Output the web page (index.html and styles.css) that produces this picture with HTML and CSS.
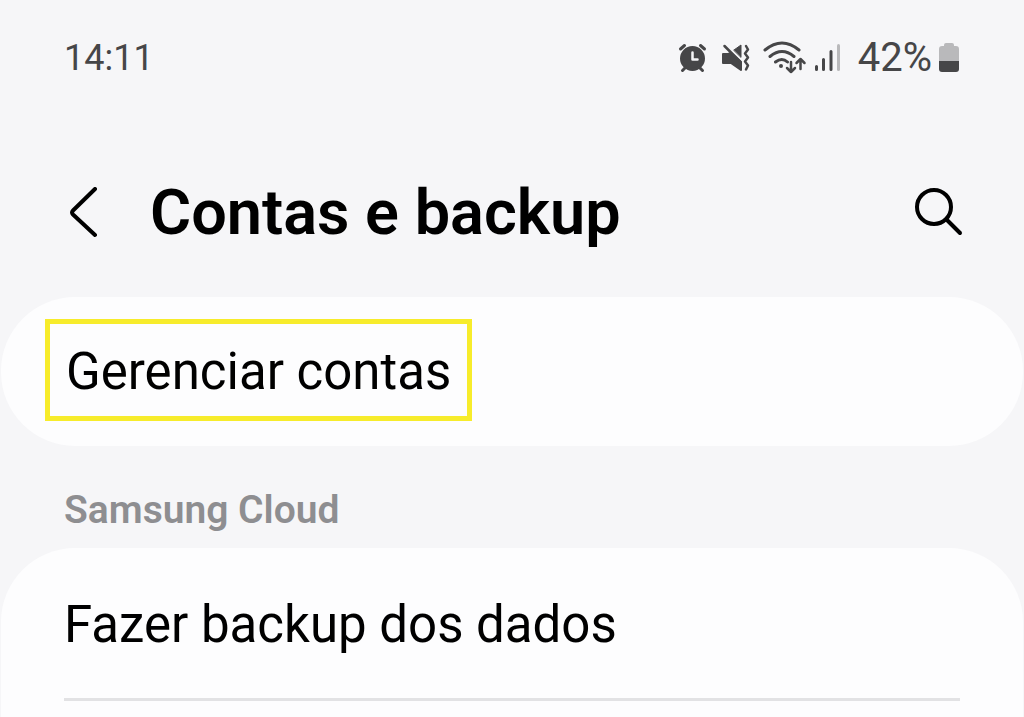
FILE: index.html
```html
<!DOCTYPE html>
<html lang="pt-BR">
<head>
<meta charset="utf-8">
<meta name="viewport" content="width=device-width, initial-scale=1">
<title>Contas e backup</title>
<link rel="stylesheet" href="styles.css">
</head>
<body>
<div class="screen">
  <div class="status-bar">
    <time class="clock">14:11</time>
    <div class="status-icons">
      <svg class="status-glyphs" width="166" height="36" viewBox="676 40 166 36" fill="none" stroke-linecap="round" stroke-linejoin="round" aria-hidden="true">
        <g stroke="#464648" stroke-width="3">
          <circle cx="692.500" cy="58.500" r="11" fill="#464648"/>
          <path d="M680.500 49l4-3.500M704.500 49l-4-3.500M685 68l-2.500 2.500M700 68l2.500 2.500"/>
          <path d="M692.500 52.500v7h5" stroke="#f6f6f8" stroke-width="2.500"/>
        </g>
        <g stroke="#464648">
          <path d="M723 54h5l3-1 10 9v8l-10-7h-8z" fill="#464648" stroke-width="2"/>
          <path d="M734 50l7-5v12z" fill="#464648" stroke-width="1"/>
          <path d="M724.500 46l16 16" stroke-width="2.500"/>
          <path d="M746 46l2 3.500-3 4 3 4-3 4 3 4-2 4" stroke-width="2.500"/>
        </g>
        <g stroke="#464648" stroke-width="3">
          <path d="M765 50q17-14 34 0M770 56.500q12-10 24 0M775.500 62q6.500-5 12 0"/>
          <circle cx="781" cy="66" r="2" fill="#464648" stroke="none"/>
          <path d="M791 62v10M787 68l4 4 4-4M800.500 69V59.500M796.500 63l4-4 4 4" stroke-width="2.500"/>
        </g>
        <g stroke="#464648" stroke-width="3">
          <path d="M816.500 66.500v3M823.500 59.500v10M831 51.500v18"/>
          <path d="M838.500 45.500v24" stroke="#b9b9bb"/>
        </g>
      </svg>
      <span class="percent">42%</span>
      <svg width="22" height="32" viewBox="0 0 22 32" aria-hidden="true">
        <path d="M6 3q0-2 2-2h6q2 0 2 2v1h2q3 0 3 3v12H1V7q0-3 3-3h2z" fill="#b9b9bb"/>
        <path d="M1 19h20v8q0 3-3 3H4q-3 0-3-3z" fill="#464648"/>
      </svg>
    </div>
  </div>
  <header class="app-bar">
    <button class="icon-button" type="button" aria-label="Voltar">
      <svg width="32" height="52" viewBox="0 0 32 52" fill="none" stroke="#000" stroke-width="4" stroke-linecap="round" stroke-linejoin="round"><path d="M27 2L5 23.500q-2 2 0 4L27 48"/></svg>
    </button>
    <h1 class="title">Contas e backup</h1>
    <button class="icon-button" type="button" aria-label="Pesquisar">
      <svg width="50" height="50" viewBox="0 0 50 50" fill="none" stroke="#000" stroke-width="4" stroke-linecap="round"><circle cx="20" cy="19" r="17"/><path d="M33 32l13 13"/></svg>
    </button>
  </header>
  <main class="content">
    <section class="card">
      <a class="item highlighted" href="#contas">Gerenciar contas</a>
    </section>
    <h2 class="section-title">Samsung Cloud</h2>
    <section class="card card-last">
      <a class="item item-row" href="#backup">Fazer backup dos dados</a>
    </section>
  </main>
</div>
</body>
</html>
```
FILE: styles.css
```css
* { box-sizing: border-box; }

body {
  margin: 0;
  background: #f6f6f8;
  color: #000;
  font-family: Roboto, "Liberation Sans", sans-serif;
}

.screen {
  display: flex;
  flex-direction: column;
  min-height: 100vh;
}

.status-bar {
  display: flex;
  align-items: center;
  justify-content: space-between;
  padding: 36px 64px 0 64px;
  color: #464648;
  font-size: 40px;
  line-height: 44px;
}

.clock { font-size: 36px; }

.status-icons {
  display: flex;
  align-items: center;
}

.percent { margin: 0 6px 0 16px; }

.app-bar {
  display: flex;
  align-items: center;
  padding: 93px 60px 44px 68px;
}

.icon-button {
  display: flex;
  padding: 0;
  border: 0;
  background: none;
}

.title {
  flex: 1;
  margin: 0 0 0 50px;
  font-size: 63px;
  font-weight: 600;
  line-height: 80px;
}

.content {
  display: flex;
  flex: 1;
  flex-direction: column;
}

.card {
  margin: 0 1px;
  padding: 22px 44px 25px;
  border-radius: 74px;
  background: #fdfdfe;
}

.item {
  color: #000;
  font-size: 51px;
  line-height: 60px;
  text-decoration: none;
}

.highlighted {
  display: inline-block;
  padding: 18px 16px 14px;
  border: 5px solid #f7ec2b;
}

.section-title {
  margin: 0;
  padding: 42px 64px 16px;
  color: #8e8e91;
  font-size: 39px;
  font-weight: 600;
  line-height: 44px;
}

.card-last {
  flex: 1;
  padding: 0 63px 16px;
  border-radius: 74px 74px 0 0;
}

.item-row {
  display: block;
  padding: 47px 0 43px;
  border-bottom: 3px solid #e2e2e4;
}
```
